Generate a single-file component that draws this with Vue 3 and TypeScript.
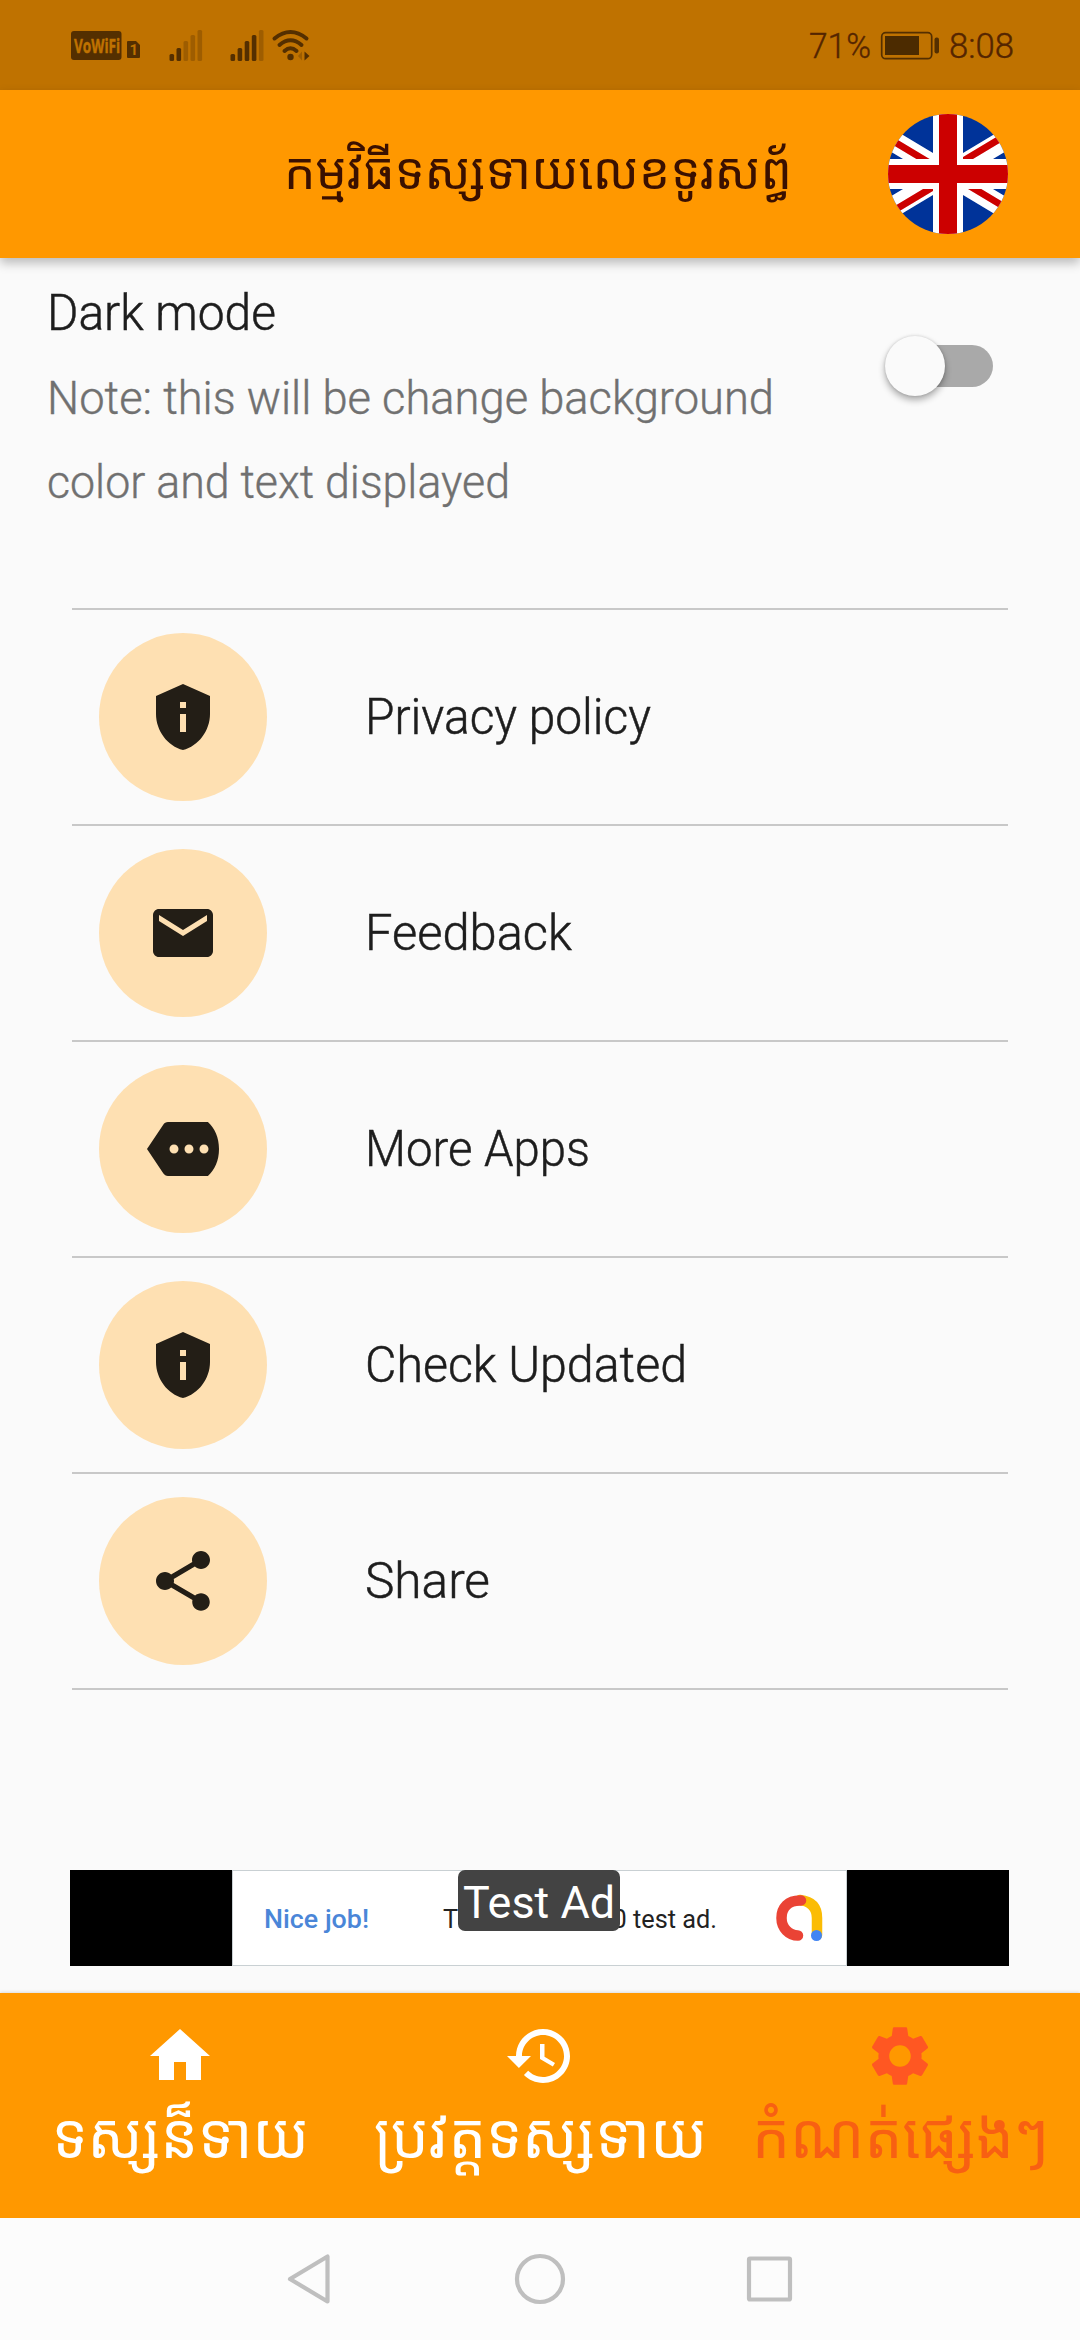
<script setup lang="ts">
interface Row { label: string; width: number; icon: string }
interface Tab { label: string; width: number; icon: string; active: boolean }

const shield = 'M12 1 3 5v6c0 5.55 3.84 10.74 9 12 5.16-1.26 9-6.45 9-12V5l-9-4zm-1 6h2v2h-2V7zm0 4h2v6h-2v-6z'

const rows: Row[] = [
  { label: 'Privacy policy', width: 286, icon: shield },
  { label: 'Feedback', width: 207, icon: 'M20 4H4c-1.1 0-1.99.9-1.99 2L2 18c0 1.1.9 2 2 2h16c1.1 0 2-.9 2-2V6c0-1.1-.9-2-2-2zm0 4-8 5-8-5V6l8 5 8-5v2z' },
  { label: 'More Apps', width: 225, icon: 'M20.300 3H7c-.69 0-1.230.350-1.590.880L0 12l5.410 8.110c.36.53.9.89 1.590.890h13.300C22.600 19 24 15.800 24 12S22.600 5 20.300 3zM9 13.5c-.83 0-1.5-.67-1.5-1.5s.67-1.5 1.5-1.5 1.5.67 1.5 1.5-.67 1.5-1.5 1.5zm5 0c-.83 0-1.5-.67-1.5-1.5s.67-1.5 1.5-1.5 1.5.67 1.5 1.5-.67 1.5-1.5 1.5zm5 0c-.83 0-1.5-.67-1.5-1.5s.67-1.5 1.5-1.5 1.5.67 1.5 1.5-.67 1.5-1.5 1.5z' },
  { label: 'Check Updated', width: 322, icon: shield },
  { label: 'Share', width: 125, icon: 'M18 16.08c-.76 0-1.44.3-1.96.77L8.91 12.7c.05-.23.09-.46.09-.7s-.04-.47-.09-.7l7.05-4.11c.54.5 1.25.81 2.04.81 1.66 0 3-1.34 3-3s-1.34-3-3-3-3 1.34-3 3c0 .24.04.47.09.7L8.04 9.81C7.5 9.31 6.79 9 6 9c-1.66 0-3 1.34-3 3s1.34 3 3 3c.79 0 1.5-.31 2.04-.81l7.12 4.16c-.05.21-.08.43-.08.65 0 1.61 1.31 2.92 2.92 2.92 1.61 0 2.92-1.31 2.92-2.92s-1.31-2.92-2.92-2.92z' },
]

const tabs: Tab[] = [
  { label: 'ទស្សន៏ទាយ', width: 257, active: false, icon: 'M10 20v-6h4v6h5v-8h3L12 3 2 12h3v8z' },
  { label: 'ប្រវត្តទស្សទាយ', width: 333, active: false, icon: 'M13 3c-4.97 0-9 4.03-9 9H1l3.89 3.89.07.14L9 12H6c0-3.87 3.13-7 7-7s7 3.13 7 7-3.13 7-7 7c-1.93 0-3.68-.79-4.94-2.06l-1.42 1.42C8.27 19.99 10.51 21 13 21c4.97 0 9-4.03 9-9s-4.03-9-9-9zm-1 5v5l4.28 2.54.72-1.21-3.5-2.08V8H12z' },
  { label: 'កំណត់ផ្សេងៗ', width: 297, active: true, icon: 'M19.14 12.94c.04-.3.06-.61.06-.94 0-.32-.02-.64-.07-.94l2.03-1.58c.18-.14.23-.41.12-.61l-1.92-3.32c-.12-.22-.37-.29-.59-.22l-2.39.96c-.5-.38-1.03-.7-1.62-.94l-.36-2.54c-.04-.24-.24-.41-.48-.41h-3.84c-.24 0-.43.17-.47.41l-.36 2.54c-.59.24-1.13.57-1.62.94l-2.39-.96c-.22-.08-.47 0-.59.22L2.74 8.87c-.12.21-.08.47.12.61l2.03 1.58c-.05.3-.09.63-.09.94s.02.64.07.94l-2.03 1.58c-.18.14-.23.41-.12.61l1.92 3.32c.12.22.37.29.59.22l2.39-.96c.5.38 1.03.7 1.62.94l.36 2.54c.05.24.24.41.48.41h3.84c.24 0 .44-.17.47-.41l.36-2.54c.59-.24 1.13-.56 1.62-.94l2.39.96c.22.08.47 0 .59-.22l1.92-3.32c.12-.22.07-.47-.12-.61l-2.01-1.58zM12 15.6c-1.98 0-3.6-1.62-3.6-3.6s1.62-3.6 3.6-3.6 3.6 1.62 3.6 3.6-1.62 3.6-3.6 3.6z' },
]

const bars = [7, 13, 20, 26, 31]
</script>

<template>
  <div class="screen">
    <header class="status">
      <svg width="240" height="90" viewBox="70 0 240 90">
        <rect x="71" y="31" width="50.5" height="29" rx="3" fill="#542f00" />
        <text transform="translate(74 52.500) scale(.68 1)" class="vowifi">VoWiFi</text>
        <path d="M128 41h8l4 4v12q0 1-1 1h-11q-1 0-1-1v-15q0-1 1-1z" fill="#542f00" />
        <text x="129.500" y="55" class="sim">1</text>
        <rect v-for="(b, i) in bars" :key="'a' + i" :x="169.5 + i * 7" :y="61 - b" width="4.6" :height="b" rx="1.5" fill="#542f00" :opacity="i < 2 ? 1 : 0.3" />
        <rect v-for="(b, i) in bars" :key="'b' + i" :x="230.5 + i * 7.1" :y="61 - b" width="4.6" :height="b" rx="1.5" fill="#542f00" :opacity="i < 4 ? 1 : 0.3" />
        <g fill="none" stroke="#542f00" stroke-width="4" stroke-linecap="round">
          <path d="M274.500 38.500Q290.500 25.500 306.500 38.500" />
          <path d="M279.500 45Q290.500 35.500 301.500 45" />
          <path d="M284.500 51Q290.500 45.500 296.500 51" />
        </g>
        <circle cx="290.500" cy="57" r="3.200" fill="#542f00" />
        <path d="M304.500 51.500l5 4.500-5 4.500z" fill="#542f00" />
        <path d="M302 51.500l-4 4.500 4 4.500z" fill="#542f00" opacity=".3" />
      </svg>
      <svg width="206" height="90" viewBox="808 0 206 90">
        <text x="809" y="58" textLength="62" lengthAdjust="spacingAndGlyphs" class="clock">71%</text>
        <rect x="881.700" y="32.700" width="50" height="26" rx="4" fill="none" stroke="#542f00" stroke-width="1.700" />
        <rect x="885" y="36" width="34" height="19" fill="#4c2b00" />
        <rect x="934.500" y="37.500" width="4.500" height="16" rx="2" fill="#542f00" />
        <text x="949" y="58" textLength="65" lengthAdjust="spacingAndGlyphs" class="clock">8:08</text>
      </svg>
    </header>

    <div class="appbar">
      <svg width="504" height="168">
        <text x="-2" y="98.500" textLength="508" lengthAdjust="spacingAndGlyphs" class="khmer title-text">កម្មវិធីទស្សទាយលេខទូរសព្ធ័</text>
      </svg>
      <svg width="120" height="120" viewBox="-60 -60 120 120">
        <defs><clipPath id="disc"><circle r="60" /></clipPath></defs>
        <g clip-path="url(#disc)">
          <rect x="-60" y="-60" width="120" height="120" fill="#039" />
          <path d="M-70-42 70 42M-70 42 70-42" stroke="#fff" stroke-width="20.500" />
          <path d="M0-4-70-46v8L0 4zM0-8 70-50v8L0 0zM0 0-70 42v8L0 8zM0-5 70 37v8L0 3z" fill="#c00" />
          <path d="M-15-60h30v45h45v30h-45v45h-30v-45h-45v-30h45z" fill="#fff" />
          <path d="M-9-60h18v51h51v18h-51v51h-18v-51h-51v-18h51z" fill="#c00" />
        </g>
      </svg>
    </div>

    <main class="content">
      <section class="mode">
        <div class="mode-copy">
          <svg width="730" height="84"><text x="-1" y="72" textLength="229" lengthAdjust="spacingAndGlyphs" class="heading">Dark mode</text></svg>
          <svg width="730" height="84"><text x="-1" y="72" textLength="727" lengthAdjust="spacingAndGlyphs" class="note">Note: this will be change background</text></svg>
          <svg width="730" height="84"><text x="-1" y="72" textLength="463" lengthAdjust="spacingAndGlyphs" class="note">color and text displayed</text></svg>
        </div>
        <div class="switch"><span class="thumb"></span></div>
      </section>

      <ul class="list">
        <li v-for="row in rows" :key="row.label" class="row">
          <span class="avatar"><svg width="72" height="72" viewBox="0 0 24 24"><path :d="row.icon" fill="#231e16" fill-rule="evenodd" /></svg></span>
          <svg width="420" height="80"><text x="0" y="57" :textLength="row.width" lengthAdjust="spacingAndGlyphs" class="heading">{{ row.label }}</text></svg>
        </li>
      </ul>

      <aside class="ad">
        <div class="creative">
          <svg width="613" height="94" viewBox="233 1871 613 94">
            <text x="264" y="1927.500" textLength="105" lengthAdjust="spacingAndGlyphs" class="nice">Nice job!</text>
            <text x="443" y="1927.500" textLength="274" lengthAdjust="spacingAndGlyphs" class="blurb">This is a 320x50 test ad.</text>
            <g fill="none" stroke-width="10.500" stroke-linecap="round">
              <path d="M800 1900Q817 1902 817 1918V1935" stroke="#fbbc04" />
              <path d="M801 1900.500C788 1900 781.500 1908 781.500 1918C781.500 1928 789 1935.500 798 1935.500" stroke="#ea4335" />
            </g>
            <circle cx="816.500" cy="1935.500" r="5.500" fill="#4285f4" />
          </svg>
        </div>
        <div class="badge">
          <svg width="162" height="61"><text x="5" y="47.500" textLength="152" lengthAdjust="spacingAndGlyphs" class="badge-text">Test Ad</text></svg>
        </div>
      </aside>
    </main>

    <nav class="tabs">
      <div v-for="tab in tabs" :key="tab.label" class="tab" :class="{ active: tab.active }">
        <svg width="72" height="72" viewBox="0 0 24 24"><path :d="tab.icon" fill="currentColor" /></svg>
        <svg :width="tab.width" height="100"><text x="0" y="66" :textLength="tab.width" lengthAdjust="spacingAndGlyphs" class="khmer tab-text">{{ tab.label }}</text></svg>
      </div>
    </nav>

    <footer class="system">
      <svg width="520" height="60" viewBox="280 2249 520 60" fill="none" stroke="#bfbfbf" stroke-width="4.200" stroke-linejoin="round">
        <path d="M327.500 2256.500V2301.500L290 2279z" />
        <circle cx="540" cy="2279" r="23" />
        <rect x="749" y="2258.500" width="41" height="41" rx="1" />
      </svg>
    </footer>
  </div>
</template>

<style>
body { background: #fafafa; }
</style>

<style scoped>
.screen {
  width: 1080px;
  height: 2340px;
  display: flex;
  flex-direction: column;
  overflow: hidden;
  background: #fafafa;
  font-family: Roboto, sans-serif;
}
svg { display: block; overflow: visible; flex: none; }
.status {
  height: 90px;
  flex: none;
  display: flex;
  justify-content: space-between;
  padding: 0 66px 0 70px;
  background: #bf7200;
}
.vowifi { font: 700 20px "Open Sans", sans-serif; fill: #bf7200; stroke: #bf7200; stroke-width: .5; }
.sim { font: 700 15px Roboto, sans-serif; fill: #bf7200; }
.clock { font: 300 35px Roboto, sans-serif; fill: #542500; stroke: #542500; stroke-width: .4; }
.appbar {
  height: 168px;
  flex: none;
  display: flex;
  align-items: center;
  justify-content: flex-end;
  gap: 98px;
  padding-right: 72px;
  background: #ff9800;
  box-shadow: 0 5px 10px rgba(0, 0, 0, .26);
  z-index: 1;
}
.khmer { font-family: "Noto Sans Khmer", "Khmer OS", Hanuman, "Noto Serif Khmer", sans-serif; }
.title-text { font-size: 51px; fill: #3a1000; }
.content { flex: 1; display: flex; flex-direction: column; }
.mode {
  height: 350px;
  display: flex;
  justify-content: space-between;
  padding: 0 87px 0 48px;
}
.heading { font: 300 50px Roboto, sans-serif; fill: #1d1d1d; stroke: #1d1d1d; stroke-width: .5; }
.note { font: 300 46px Roboto, sans-serif; fill: #707070; stroke: #707070; stroke-width: .4; }
.switch {
  width: 99px;
  height: 42px;
  margin-top: 87px;
  display: flex;
  align-items: center;
  border-radius: 21px;
  background: #a9a9a9;
}
.thumb {
  width: 60px;
  height: 60px;
  flex: none;
  margin-left: -9px;
  border-radius: 50%;
  background: #fafafa;
  box-shadow: 0 4px 7px rgba(0, 0, 0, .32), 0 0 3px rgba(0, 0, 0, .15);
}
.list {
  list-style: none;
  margin: 0 72px;
  padding: 0;
  border-top: 2px solid #c8c8c8;
}
.row {
  box-sizing: border-box;
  height: 216px;
  display: flex;
  align-items: center;
  gap: 98px;
  padding-left: 27px;
  border-bottom: 2px solid #c8c8c8;
}
.avatar {
  width: 168px;
  height: 168px;
  display: flex;
  align-items: center;
  justify-content: center;
  border-radius: 50%;
  background: #fee0b2;
}
.ad {
  width: 939px;
  height: 96px;
  margin: 180px 0 0 70px;
  display: flex;
  justify-content: center;
  position: relative;
  background: #000;
}
.creative { width: 613px; height: 94px; background: #fff; border: 1px solid #c9d0d3; }
.nice { font: 500 25px Roboto, sans-serif; fill: #4a86d8; }
.blurb { font: 400 25px Roboto, sans-serif; fill: #222; }
.badge {
  position: absolute;
  top: 0;
  left: 388px;
  width: 162px;
  height: 61px;
  border-radius: 7px;
  background: #434343;
}
.badge-text { font: 400 45px Roboto, sans-serif; fill: #fff; }
.tabs {
  height: 225px;
  flex: none;
  display: flex;
  background: #ff9800;
  box-shadow: 0 -1px 3px rgba(0, 0, 0, .12);
}
.tab {
  flex: 1 1 0;
  display: flex;
  flex-direction: column;
  align-items: center;
  padding-top: 27px;
  color: #fff;
}
.active { color: #ff5722; }
.tab-text { font-size: 63px; fill: currentColor; }
.active .tab-text { fill: #f86012; }
.system {
  height: 122px;
  flex: none;
  display: flex;
  align-items: center;
  justify-content: center;
  background: #fcfcfc;
}
</style>
